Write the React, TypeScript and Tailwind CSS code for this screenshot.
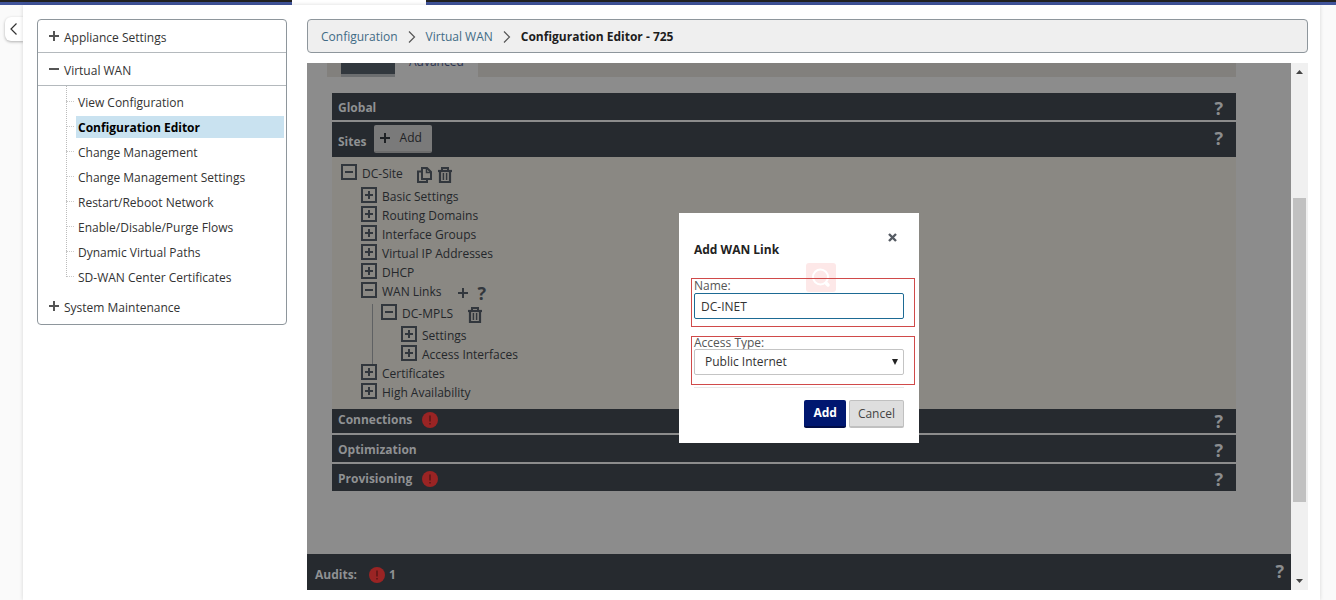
import React, { useState } from "react";

const menuItems = [
  "View Configuration",
  "Configuration Editor",
  "Change Management",
  "Change Management Settings",
  "Restart/Reboot Network",
  "Enable/Disable/Purge Flows",
  "Dynamic Virtual Paths",
  "SD-WAN Center Certificates",
];

function Plus({ className = "" }: { className?: string }) {
  return (
    <svg viewBox="0 0 10 10" className={`size-[10px] shrink-0 ${className}`} aria-hidden="true">
      <path d="M4 0h2v4h4v2H6v4H4V6H0V4h4z" fill="currentColor" />
    </svg>
  );
}

function Toggle({ open, label }: { open?: boolean; label: string }) {
  return (
    <button type="button" aria-label={`Toggle ${label}`} className="size-4 shrink-0 text-[#32373d]">
      <svg viewBox="0 0 16 16" className="size-4">
        <rect x="1" y="1" width="14" height="14" fill="none" stroke="currentColor" strokeWidth="2" />
        <path d={open ? "M4 7h8v2H4z" : "M7 4h2v3h3v2H9v3H7V9H4V7h3z"} fill="currentColor" />
      </svg>
    </button>
  );
}

function CopyIcon() {
  return (
    <svg viewBox="0 0 15 16" className="h-4 w-[15px]" fill="none" stroke="currentColor" strokeWidth="2">
      <path d="M5 1h5l4 4v7H5z" />
      <path d="M9.500 1v4.500H14" strokeWidth="1.500" />
      <path d="M5 4.500H1V15h9v-3" />
    </svg>
  );
}

function TrashIcon() {
  return (
    <svg viewBox="0 0 14 16" className="h-4 w-[14px]" fill="none" stroke="currentColor">
      <path d="M0 4h14" strokeWidth="2.200" />
      <path d="M4 3.500V1h6v2.500" strokeWidth="2" />
      <path d="M2 4v11h10V4" strokeWidth="2.200" />
      <path d="M5.400 6v7M8.600 6v7" strokeWidth="1.500" />
    </svg>
  );
}

function Help({ className = "" }: { className?: string }) {
  return (
    <button type="button" aria-label="Help" className={`text-[18px] leading-5 font-bold text-[#8b8d8f] ${className}`}>
      ?
    </button>
  );
}

function Alert() {
  return (
    <svg viewBox="0 0 16 16" className="size-4 shrink-0" role="img" aria-label="Error">
      <circle cx="8" cy="8" r="8" fill="#9a2424" />
      <path d="M7.200 3.500h1.600v6H7.200zM7.200 11h1.600v1.600H7.200z" fill="#5d1717" />
    </svg>
  );
}

function Node({
  label,
  open,
  actions,
  tall,
  children,
}: {
  label: string;
  open?: boolean;
  actions?: React.ReactNode;
  tall?: boolean;
  children?: React.ReactNode;
}) {
  return (
    <li>
      <div className={`flex items-start gap-[5px] ${tall ? "h-[22px]" : "h-[19px]"}`}>
        <Toggle open={open} label={label} />
        <span className="leading-5">{label}</span>
        {actions}
      </div>
      {children}
    </li>
  );
}

function Section({ title, alert }: { title: string; alert?: boolean }) {
  return (
    <section className="flex h-[27px] items-center bg-[#262a2f] pt-[2px] pr-[13px] pl-[6px]">
      <h2 className="font-bold text-[#8f9193]">{title}</h2>
      {alert && (
        <span className="ml-[10px]">
          <Alert />
        </span>
      )}
      <Help className="ml-auto" />
    </section>
  );
}

export default function App() {
  const [name, setName] = useState("DC-INET");
  return (
    <div className="flex min-h-screen flex-col bg-[#fafafa] font-['Open_Sans','Noto_Sans',sans-serif] text-[12px] leading-4 text-[#333]">
      <div className="flex h-[5px]">
        <div className="w-[292px] border-t-2 border-[#222] bg-[#41549b]" />
        <div className="w-[134px] bg-white" />
        <div className="flex-1 border-t-2 border-[#222] bg-[#41549b]" />
      </div>
      <div className="flex flex-1">
        <div className="w-[23px] pt-3 pl-[5px]">
          <button
            type="button"
            aria-label="Back"
            className="flex h-6 w-[19px] items-center rounded-l-md bg-white pl-[5px] shadow-[0_1px_3px_rgba(0,0,0,0.3)]"
          >
            <svg viewBox="0 0 8 12" className="h-3 w-2" fill="none" stroke="#333" strokeWidth="1.200">
              <path d="M6.500 0.500 1 6l5.500 5.500" />
            </svg>
          </button>
        </div>
        <div className="relative flex flex-1 items-stretch gap-5 bg-white pt-[14px] pr-3 pb-[10px] pl-[14px] shadow-[0_0_4px_rgba(0,0,0,0.15)]">
          <nav className="w-[250px] shrink-0 self-start rounded border border-[#8e969c]">
            <div className="flex h-[33px] items-center gap-[5px] border-b border-[#b4b9bd] pl-[11px]">
              <Plus className="text-[#555]" />
              <a href="#appliance" className="pt-[3px]">Appliance Settings</a>
            </div>
            <div className="flex h-[33px] items-center gap-[5px] border-b border-[#b4b9bd] pl-[11px]">
              <span className="h-[2px] w-[10px] bg-[#555]" />
              <a href="#vwan" className="pt-[3px]">Virtual WAN</a>
            </div>
            <ul className="relative ml-7 flex flex-col gap-[3px] pt-[5px] pr-[2px]">
              <li aria-hidden="true" className="absolute top-0 bottom-[11px] left-0 border-l border-dotted border-[#bbb]" />
              {menuItems.map((item) => (
                <li key={item} className="flex h-[22px]">
                  <span className="mr-[2px] h-[11px] w-2 border-b border-dotted border-[#ccc]" />
                  <a
                    href="#item"
                    className={
                      item === "Configuration Editor"
                        ? "flex flex-1 items-center bg-[#c9e2f0] pt-px pl-[2px] font-bold text-black"
                        : "flex flex-1 items-center pt-px pl-[2px]"
                    }
                  >
                    {item}
                  </a>
                </li>
              ))}
            </ul>
            <div className="flex h-[36px] items-center gap-[5px] pl-[11px]">
              <Plus className="text-[#555]" />
              <a href="#maintenance" className="pt-[3px]">System Maintenance</a>
            </div>
          </nav>
          <div className="flex min-w-0 flex-1 flex-col gap-[10px]">
            <nav aria-label="Breadcrumb" className="flex h-[34px] items-center gap-[10px] rounded border border-[#8e969c] bg-[#efefef] pt-px pl-[13px]">
              <a href="#configuration" className="text-[#3f6b85]">Configuration</a>
              <svg viewBox="0 0 8 12" className="h-3 w-2" fill="none" stroke="#555" strokeWidth="1.200">
                <path d="M1 0.500 6.500 6 1 11.500" />
              </svg>
              <a href="#virtual-wan" className="text-[#3f6b85]">Virtual WAN</a>
              <svg viewBox="0 0 8 12" className="h-3 w-2" fill="none" stroke="#555" strokeWidth="1.200">
                <path d="M1 0.500 6.500 6 1 11.500" />
              </svg>
              <span className="font-bold text-[#1d1d1d]">Configuration Editor - 725</span>
            </nav>
            <div className="flex flex-1">
              <main className="relative flex flex-1 flex-col bg-[#8c8c8c] text-[#24272b]">
                <div className="mr-[55px] ml-5 flex h-[14px] items-end overflow-hidden bg-[#82807d] pl-[14px]">
                  <div className="h-[14px] w-[54px] border-b-[3px] border-[#6c6e70] bg-[#32383e]" />
                  <a href="#advanced" className="flex h-[27px] items-start bg-[#8c8c8c] px-[14px] pt-1 text-[#2b3350]">
                    Advanced
                  </a>
                </div>
                <div className="mt-4 mr-[55px] ml-[25px] flex flex-col gap-[2px]">
                  <Section title="Global" />
                  <div>
                    <section className="flex h-[35px] items-center bg-[#262a2f] pr-[13px] pl-[6px]">
                      <h2 className="pt-1 font-bold text-[#8f9193]">Sites</h2>
                      <button
                        type="button"
                        className="mb-px ml-[7px] flex h-7 items-center gap-[10px] rounded-xs border-b-2 border-[#6c6c6c] bg-[#7a7a7a] pr-[10px] pl-[6px] text-[#1f2225]"
                      >
                        <Plus />
                        Add
                      </button>
                      <Help className="mb-1 ml-auto" />
                    </section>
                    <ul className="bg-[#8a8883] pt-[7px] pb-[7px] pl-[9px]">
                      <Node
                        label="DC-Site"
                        open
                        tall
                        actions={
                          <span className="mt-[3px] ml-[9px] flex gap-[6px] text-[#32373d]">
                            <button type="button" aria-label="Copy site"><CopyIcon /></button>
                            <button type="button" aria-label="Delete site"><TrashIcon /></button>
                          </span>
                        }
                      >
                        <ul className="mt-px pl-5">
                          <Node label="Basic Settings" />
                          <Node label="Routing Domains" />
                          <Node label="Interface Groups" />
                          <Node label="Virtual IP Addresses" />
                          <Node label="DHCP" />
                          <Node
                            label="WAN Links"
                            open
                            tall
                            actions={
                              <span className="mt-px ml-[11px] flex items-center gap-[10px] text-[#32373d]">
                                <button type="button" aria-label="Add WAN link"><Plus /></button>
                                <button type="button" aria-label="WAN link help" className="text-[18px] leading-5 font-bold">?</button>
                              </span>
                            }
                          >
                            <ul className="ml-[11px] border-l border-[#5f6163] pl-2">
                              <Node
                                label="DC-MPLS"
                                open
                                tall
                                actions={
                                  <button type="button" aria-label="Delete WAN link" className="mt-[3px] ml-[10px] text-[#32373d]">
                                    <TrashIcon />
                                  </button>
                                }
                              >
                                <ul className="pl-5">
                                  <Node label="Settings" />
                                  <Node label="Access Interfaces" />
                                </ul>
                              </Node>
                            </ul>
                          </Node>
                          <Node label="Certificates" />
                          <Node label="High Availability" />
                        </ul>
                      </Node>
                    </ul>
                    <section className="flex h-6 items-center bg-[#262a2f] pr-[13px] pb-[2px] pl-[6px]">
                      <h2 className="font-bold text-[#8f9193]">Connections</h2>
                      <span className="ml-[10px]"><Alert /></span>
                      <Help className="mt-[2px] ml-auto" />
                    </section>
                  </div>
                  <Section title="Optimization" />
                  <Section title="Provisioning" alert />
                </div>
                <footer className="mt-auto flex h-9 items-center bg-[#262a2f] pt-[6px] pr-[7px] pl-2 font-bold text-[#8f9193]">
                  Audits:
                  <span className="mr-1 ml-3"><Alert /></span>1
                  <Help className="mb-2 ml-auto" />
                </footer>

                <div className="absolute inset-0 flex items-start justify-center pt-[150px]">
                  <form
                    role="dialog"
                    aria-label="Add WAN Link"
                    onSubmit={(e) => e.preventDefault()}
                    className="relative w-[240px] bg-white pt-5 pr-1 pb-[15px] pl-3 text-[#444]"
                  >
                    <svg viewBox="0 0 30 30" className="absolute top-[50px] left-[127px] size-[30px]" aria-hidden="true">
                      <rect width="30" height="29" rx="3" fill="#fde8e8" />
                      <circle cx="14.500" cy="14" r="7.500" fill="none" stroke="#fff" strokeWidth="2" />
                      <path d="m20 20 2 2" stroke="#fff" strokeWidth="3.500" strokeLinecap="round" />
                    </svg>
                    <div className="flex justify-end pr-[18px]">
                      <button type="button" aria-label="Close" className="text-[#555b63]">
                        <svg viewBox="0 0 9 9" className="size-[9px]">
                          <path d="m1 1 7 7M8 1 1 8" stroke="currentColor" strokeWidth="2.400" />
                        </svg>
                      </button>
                    </div>
                    <h1 className="pl-[3px] font-bold text-[#222]">Add WAN Link</h1>
                    <div className="relative mt-5 border border-[#d04a4a] pr-[10px] pb-[7px] pl-[2px]">
                      <label htmlFor="link-name" className="block leading-[14px] text-[#555]">Name:</label>
                      <input
                        id="link-name"
                        value={name}
                        onChange={(e) => setName(e.target.value)}
                        className="block h-[26px] w-full rounded-xs border border-[#1d6a94] bg-white px-[6px] text-[#333] outline-none"
                      />
                    </div>
                    <div className="mt-[9px] border border-[#d04a4a] pr-[10px] pb-[9px] pl-[2px]">
                      <label htmlFor="access-type" className="block leading-3 text-[#555]">Access Type:</label>
                      <div className="relative">
                        <select
                          id="access-type"
                          className="block h-[26px] w-full appearance-none rounded-xs border border-[#c4c4c4] bg-white px-[10px] text-[#333]"
                        >
                          <option>Public Internet</option>
                          <option>Private MPLS</option>
                          <option>Private Intranet</option>
                        </select>
                        <svg viewBox="0 0 6 6" className="pointer-events-none absolute top-[10px] right-[6px] size-[6px]">
                          <path d="M0 0h6L3 6z" fill="#222" />
                        </svg>
                      </div>
                    </div>
                    <div className="mt-[2px] mr-[11px] ml-[3px] flex justify-end gap-[3px] border-t border-[#e8e8e8] pt-3">
                      <button type="submit" className="h-7 rounded-xs border-b-2 border-[#000c46] bg-[#001770] px-[9px] font-bold text-white">
                        Add
                      </button>
                      <button type="button" className="h-7 rounded-xs border border-b-2 border-[#c0c0c0] bg-[#dedede] px-2 text-[#444]">
                        Cancel
                      </button>
                    </div>
                  </form>
                </div>
              </main>
              <div className="flex w-[17px] flex-col items-center bg-[#f0f0f0] pt-[7px] pb-[7px]" aria-hidden="true">
                <svg viewBox="0 0 7 4" className="h-1 w-[7px]"><path d="M0 4h7L3.500 0z" fill="#444" /></svg>
                <div className="mt-[124px] h-[304px] w-[13px] bg-[#c1c1c1]" />
                <svg viewBox="0 0 7 4" className="mt-auto h-1 w-[7px]"><path d="M0 0h7L3.500 4z" fill="#444" /></svg>
              </div>
            </div>
          </div>
        </div>
        <div className="w-4" />
      </div>
    </div>
  );
}
